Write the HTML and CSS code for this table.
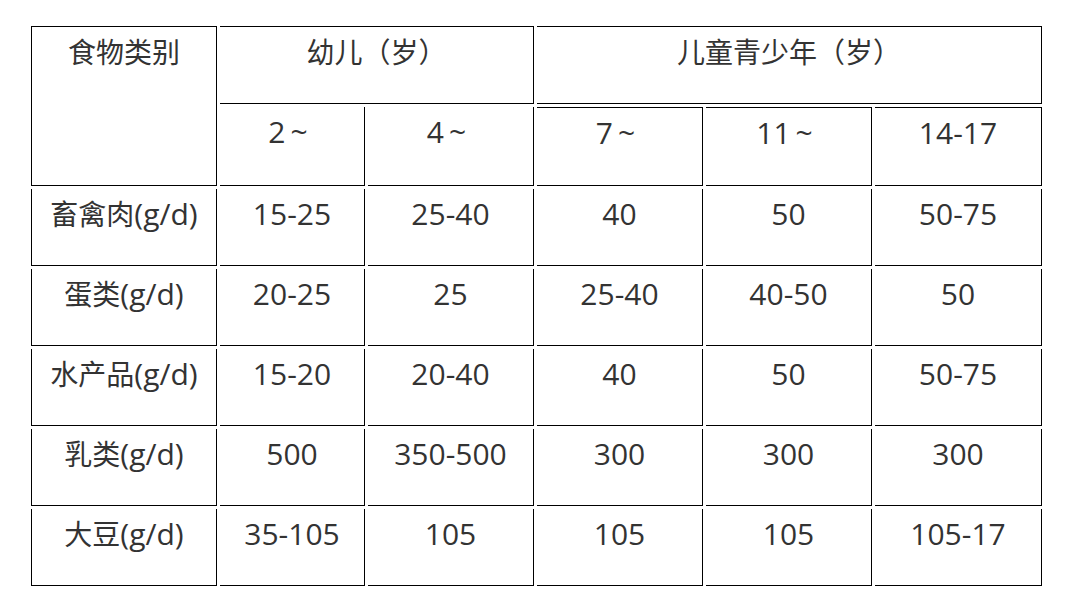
FILE: index.html
```html
<!DOCTYPE html>
<html lang="zh-CN">
<head>
<meta charset="utf-8">
<title>食物类别</title>
<link rel="stylesheet" href="styles.css">
</head>
<body>
<div class="table">
  <div class="cell c-head bl bt"><span class="cjk">食物类别</span></div>
  <div class="cell c-young bt"><span class="cjk">幼儿（岁）</span></div>
  <div class="cell c-teen bt"><span class="cjk">儿童青少年（岁）</span></div>
  <div class="cell">2<span class="tl">~</span></div>
  <div class="cell">4<span class="tl">~</span></div>
  <div class="cell bt">7<span class="tl">~</span></div>
  <div class="cell bt">11<span class="tl">~</span></div>
  <div class="cell bt">14-17</div>

  <div class="cell bl"><span class="cjk">畜禽肉</span>(g/d)</div>
  <div class="cell">15-25</div>
  <div class="cell">25-40</div>
  <div class="cell">40</div>
  <div class="cell">50</div>
  <div class="cell">50-75</div>

  <div class="cell bl"><span class="cjk">蛋类</span>(g/d)</div>
  <div class="cell">20-25</div>
  <div class="cell">25</div>
  <div class="cell">25-40</div>
  <div class="cell">40-50</div>
  <div class="cell">50</div>

  <div class="cell bl"><span class="cjk">水产品</span>(g/d)</div>
  <div class="cell">15-20</div>
  <div class="cell">20-40</div>
  <div class="cell">40</div>
  <div class="cell">50</div>
  <div class="cell">50-75</div>

  <div class="cell bl"><span class="cjk">乳类</span>(g/d)</div>
  <div class="cell">500</div>
  <div class="cell">350-500</div>
  <div class="cell">300</div>
  <div class="cell">300</div>
  <div class="cell">300</div>

  <div class="cell bl"><span class="cjk">大豆</span>(g/d)</div>
  <div class="cell">35-105</div>
  <div class="cell">105</div>
  <div class="cell">105</div>
  <div class="cell">105</div>
  <div class="cell">105-17</div>
</div>
</body>
</html>
```
FILE: styles.css
```css
html, body {
  margin: 0;
  padding: 0;
  background: #ffffff;
}

body {
  font-family: "Open Sans", "Noto Sans CJK SC", sans-serif;
  font-size: 30px;
  color: #333333;
}

.table {
  display: grid;
  grid-template-columns: 186px 145px 166px 166px 166px 167px;
  grid-template-rows: 78px 79px repeat(5, 77px);
  gap: 3px;
  width: 1011px;
  margin: 26px 0 0 31px;
}

.cell {
  box-sizing: border-box;
  border-right: 1px solid #000;
  border-bottom: 1px solid #000;
  padding-top: 4px;
  line-height: 42px;
  text-align: center;
  white-space: nowrap;
}

.cjk {
  font-size: 28px;
}

.tl {
  display: inline-block;
  margin-left: 5px;
  margin-right: 8px;
  font-size: 30px;
}

.bl {
  border-left: 1px solid #000;
}

.bt {
  border-top: 1px solid #000;
}

.c-head {
  grid-row: 1 / 3;
  grid-column: 1;
}

.c-young {
  grid-column: 2 / 4;
}

.c-teen {
  grid-column: 4 / 7;
}
```
